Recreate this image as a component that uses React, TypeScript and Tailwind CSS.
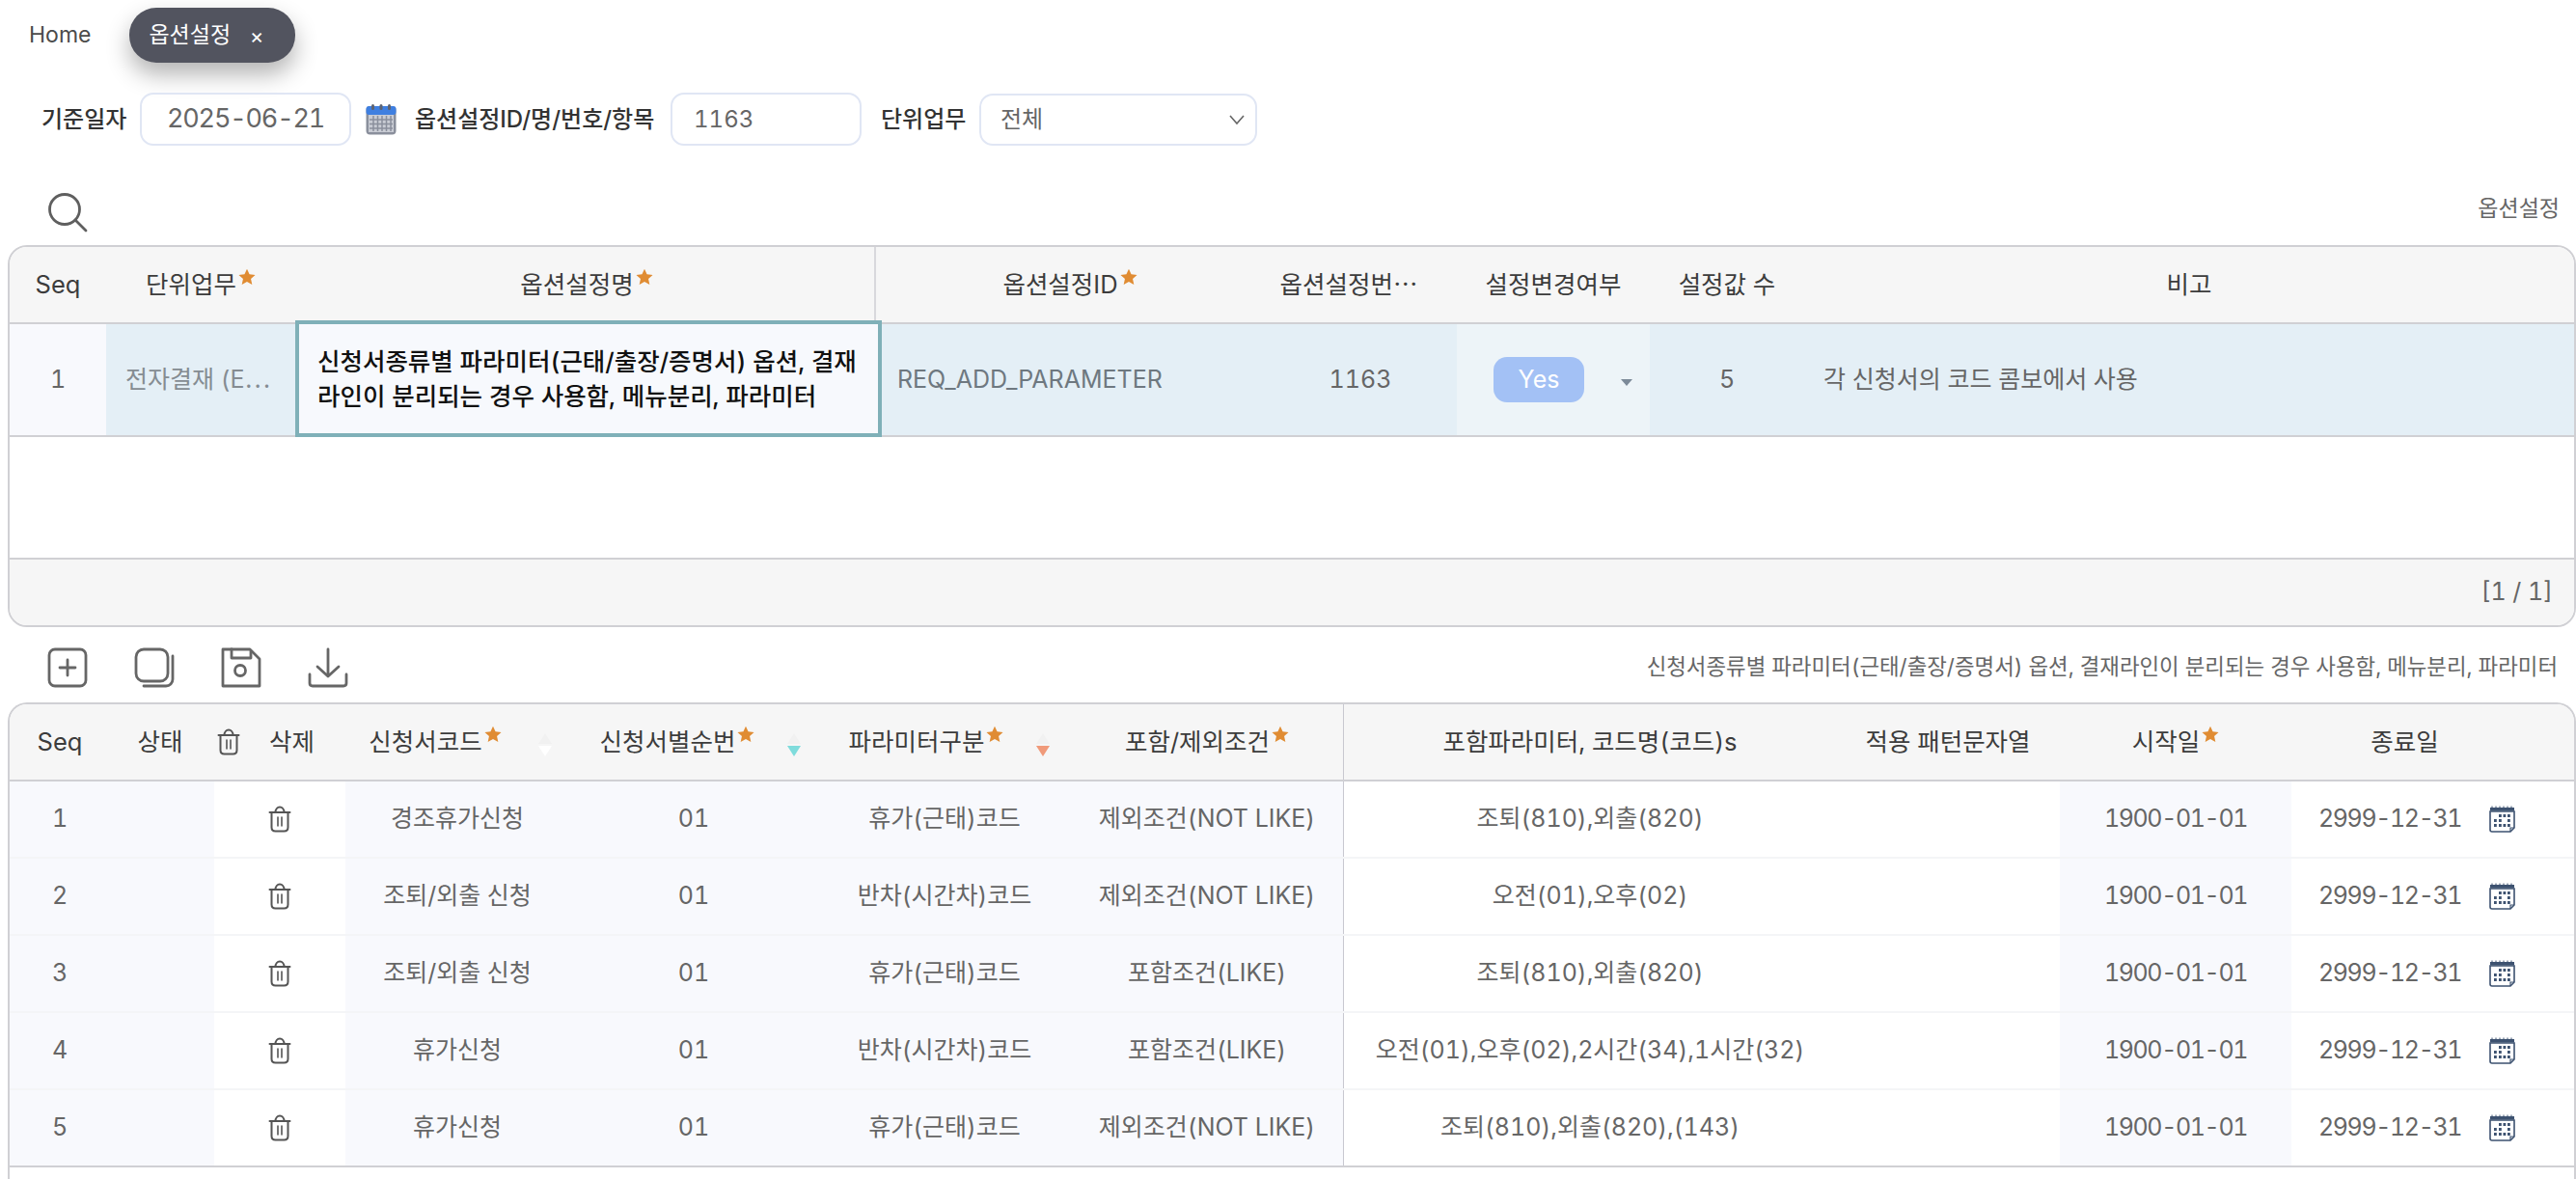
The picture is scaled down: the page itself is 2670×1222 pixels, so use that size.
import React from "react";

const FONT = "font-['Inter','Noto_Sans_CJK_KR',sans-serif]";

function Star() {
  return (
    <svg width="18" height="18" viewBox="0 0 24 24" className="self-start mt-[2px] ml-[2px] shrink-0">
      <path d="M12 1l3.400 7.400 8 .9-6 5.400 1.700 8L12 18.600 4.900 22.700l1.700-8-6-5.400 8-.9z" fill="#e08c33" />
    </svg>
  );
}

function Trash({ className = "" }: { className?: string }) {
  return (
    <svg width="24" height="28" viewBox="0 0 24 28" fill="none" stroke="#555" strokeWidth="2" strokeLinecap="round" strokeLinejoin="round" className={className}>
      <path d="M1.500 7h21" />
      <path d="M7.500 7c0-3.200 2-5.500 4.500-5.500S16.500 3.800 16.500 7" />
      <path d="M3.500 7v15.500c0 2.500 1.500 4 4 4h9c2.500 0 4-1.500 4-4V7" />
      <path d="M10 12v9M14 12v9" strokeWidth="1.600" />
    </svg>
  );
}

function SmallCal() {
  return (
    <svg width="27" height="28" viewBox="0 0 27 28" className="shrink-0">
      <path d="M1 6h25v17l-4 4H3c-1 0-2-1-2-2z" fill="#fff" stroke="#3d5270" strokeWidth="1.600" />
      <path d="M22 27v-4h4" fill="none" stroke="#3d5270" strokeWidth="1.200" />
      <rect x="1" y="2" width="25" height="3.500" fill="#3d5270" />
      <path d="M3 0.500v2M7 0.500v2M11 0.500v2M15 0.500v2M19 0.500v2M23 0.500v2" stroke="#3d5270" strokeWidth="1" />
      <g fill="#3d5270">
        <rect x="10" y="9" width="2.800" height="3" />
        <rect x="14.500" y="9" width="2.800" height="3" />
        <rect x="19" y="9" width="2.800" height="3" />
        <rect x="5" y="14" width="2.800" height="3" />
        <rect x="10" y="14" width="2.800" height="3" />
        <rect x="19" y="14" width="2.800" height="3" />
        <rect x="5" y="19" width="2.800" height="3" />
        <rect x="10" y="19" width="2.800" height="3" />
        <rect x="14.500" y="19" width="2.800" height="3" />
        <rect x="19" y="19" width="2.800" height="3" />
      </g>
    </svg>
  );
}

function BigCal() {
  return (
    <svg width="32" height="33" viewBox="0 0 32 33" className="shrink-0">
      <rect x="0.500" y="3" width="31" height="29.500" rx="4" fill="#8a8f9c" />
      <rect x="0.500" y="3" width="31" height="9" rx="3" fill="#3f7fe0" />
      <rect x="3" y="12" width="26" height="18" fill="#c9ccd4" />
      <g fill="#5e6370">
        <rect x="6" y="1" width="3" height="6" rx="1.500" />
        <rect x="14.500" y="1" width="3" height="6" rx="1.500" />
        <rect x="23" y="1" width="3" height="6" rx="1.500" />
      </g>
      <path d="M4 17h24M4 21.500h24M4 26h24M8 13v16M12.500 13v16M17 13v16M21.500 13v16M26 13v16" stroke="#8a8f9c" strokeWidth="1.500" />
    </svg>
  );
}

function SearchIcon() {
  return (
    <svg width="42" height="42" viewBox="0 0 42 42" fill="none" stroke="#5f5f5f" strokeWidth="2.800" strokeLinecap="round">
      <circle cx="18" cy="18" r="15.500" />
      <path d="M29 29l11 11" />
    </svg>
  );
}

function ToolIcon({ children }: { children: React.ReactNode }) {
  return (
    <svg width="42" height="42" viewBox="0 0 42 42" fill="none" stroke="#666" strokeWidth="2.800" strokeLinecap="round" strokeLinejoin="round" className="shrink-0">
      {children}
    </svg>
  );
}

function Header({ children, star, pr = 0, className = "" }: { children?: React.ReactNode; star?: boolean; pr?: number; className?: string }) {
  return (
    <div className={`relative flex items-center justify-center h-full text-[25.500px] text-[#3c3c3c] ${className}`} style={pr ? { paddingRight: pr } : undefined}>
      <span className="flex items-center whitespace-nowrap">
        <span>{children}</span>
        {star && <Star />}
      </span>
    </div>
  );
}

function Sort({ color, right = 18 }: { color: string; right?: number }) {
  return (
    <div className="absolute top-[30px] flex flex-col items-center gap-[2px]" style={{ right }}>
      <div className="w-0 h-0 border-x-[7px] border-x-transparent border-b-[11px] border-b-[#f1f1f1]" />
      <div className="w-0 h-0 border-x-[7px] border-x-transparent border-t-[11px]" style={{ borderTopColor: color }} />
    </div>
  );
}

const rows = [
  ["1", "경조휴가신청", "01", "휴가(근태)코드", "제외조건(NOT LIKE)", "조퇴(810),외출(820)"],
  ["2", "조퇴/외출 신청", "01", "반차(시간차)코드", "제외조건(NOT LIKE)", "오전(01),오후(02)"],
  ["3", "조퇴/외출 신청", "01", "휴가(근태)코드", "포함조건(LIKE)", "조퇴(810),외출(820)"],
  ["4", "휴가신청", "01", "반차(시간차)코드", "포함조건(LIKE)", "오전(01),오후(02),2시간(34),1시간(32)"],
  ["5", "휴가신청", "01", "휴가(근태)코드", "제외조건(NOT LIKE)", "조퇴(810),외출(820),(143)"],
];

const grid2 = "grid grid-cols-[100px_112px_136px_232px_258px_262px_283px_510px_232px_240px_235px_1fr]";
const cell = "flex items-center justify-center h-full";

export default function App() {
  return (
    <div className={`w-[2670px] h-[1222px] overflow-hidden bg-white ${FONT} text-[#666] text-[25px] tabular-nums`}>
      {/* tabs */}
      <div className="flex items-center pl-[30px] pt-[8px] h-[65px]">
        <span className="text-[23px] text-[#4b4b4b]">Home</span>
        <div className="ml-[40px] w-[172px] h-[57px] rounded-[28px] bg-[#52545f] text-white flex items-center pl-[20px] shadow-[0_12px_24px_rgba(0,0,0,0.3)]">
          <span className="text-[23px]">옵션설정</span>
          <span className="ml-[20px] text-[22px] leading-none">×</span>
        </div>
      </div>

      {/* filters */}
      <div className="flex items-center mt-[31px] h-[55px] pl-[43px]">
        <span className="w-[102px] text-[24px] font-medium text-[#333]">기준일자</span>
        <div className="w-[219px] h-[55px] rounded-[14px] border-2 border-[#e0e6f4] flex items-center pl-[26px] text-[27px] tracking-[-1.200px] text-[#666]">2025-06-21</div>
        <div className="ml-[15px]"><BigCal /></div>
        <span className="ml-[19px] w-[265px] text-[24px] font-medium text-[#333] whitespace-nowrap">옵션설정ID/명/번호/항목</span>
        <div className="w-[198px] h-[55px] rounded-[14px] border-2 border-[#e0e6f4] flex items-center pl-[22px] text-[24px]">1163</div>
        <span className="ml-[20px] w-[102px] text-[24px] font-medium text-[#333]">단위업무</span>
        <div className="w-[288px] h-[54px] rounded-[14px] border-2 border-[#e0e6f4] flex items-center justify-between pl-[20px] pr-[10px] text-[24px]">
          <span>전체</span>
          <svg width="18" height="12" viewBox="0 0 18 12" fill="none" stroke="#666" strokeWidth="1.600"><path d="M2 2l7 8 7-8" /></svg>
        </div>
      </div>

      {/* search row */}
      <div className="h-[103px] flex items-end justify-between pl-[49px] pr-[17px] pb-[13px]">
        <SearchIcon />
        <span className="text-[23px] text-[#666] mb-[8px]">옵션설정</span>
      </div>

      {/* table 1 */}
      <div className="ml-[8px] h-[396px] rounded-[20px] border-2 border-[#d0d0d4] overflow-hidden flex flex-col">
        <div className="grid grid-cols-[100px_196px_602px_402px_200px_200px_160px_1fr] h-[80px] shrink-0 bg-[#f6f6f6] items-center border-b-2 border-[#d0d0d4]">
          <Header>Seq</Header>
          <Header star>단위업무</Header>
          <Header star className="border-r-2 border-[#d8d8dc] pl-[4px]">옵션설정명</Header>
          <Header star>옵션설정ID</Header>
          <Header pr={24}>옵션설정번⋯</Header>
          <Header>설정변경여부</Header>
          <Header>설정값 수</Header>
          <Header>비고</Header>
        </div>
        <div className="grid grid-cols-[100px_196px_602px_402px_200px_200px_160px_1fr] h-[117px] shrink-0 border-b-2 border-[#d0d0d4] bg-[#e4eff6]">
          <div className={`${cell} bg-[#f8f9fd]`}>1</div>
          <div className="flex items-center pl-[20px] h-full whitespace-nowrap text-[#858c92]">전자결재 (E⋯</div>
          <div className="relative h-full">
            <div className="absolute -top-[4px] -bottom-[2px] left-0 -right-[6px] border-[4px] border-[#7fb0b8] bg-[#f7f9fd] flex items-center pl-[19px] pr-[6px] text-[25.500px] font-medium leading-[36px] text-[#111]">
              <span className="whitespace-nowrap">신청서종류별 파라미터(근태/출장/증명서) 옵션, 결재<br />라인이 분리되는 경우 사용함, 메뉴분리, 파라미터</span>
            </div>
          </div>
          <div className="flex items-center pl-[22px] h-full text-[#6e7880]">REQ_ADD_PARAMETER</div>
          <div className={cell}>1163</div>
          <div className="relative flex items-center h-full bg-[#edf4f8] pl-[38px]">
            <div className="w-[94px] h-[47px] rounded-[14px] bg-[#a3c1f5] text-white flex items-center justify-center">Yes</div>
            <div className="absolute right-[18px] top-[57px] w-0 h-0 border-x-[6px] border-x-transparent border-t-[7px] border-t-[#7c8a99]" />
          </div>
          <div className={cell}>5</div>
          <div className="flex items-center pl-[20px] h-full">각 신청서의 코드 콤보에서 사용</div>
        </div>
        <div className="flex-1" />
        <div className="h-[70px] shrink-0 bg-[#f6f6f6] border-t-2 border-[#d0d0d4] flex items-center justify-end pr-[22px]">[1 / 1]</div>
      </div>

      {/* toolbar */}
      <div className="h-[78px] flex items-center justify-between pl-[49px] pr-[19px]">
        <div className="flex items-center gap-[48px] mt-[6px]">
          <ToolIcon>
            <rect x="2" y="2" width="38" height="38" rx="6" />
            <path d="M21 13v16M13 21h16" />
          </ToolIcon>
          <ToolIcon>
            <rect x="2" y="2" width="33" height="33" rx="8" />
            <path d="M40 9v24c0 4-3 7-7 7H10" />
          </ToolIcon>
          <ToolIcon>
            <path d="M2 2h28l10 10v28H2z" />
            <path d="M11 2v9h20V4" />
            <circle cx="20" cy="24" r="5.500" />
          </ToolIcon>
          <ToolIcon>
            <path d="M21 2v28M10 20l11 10 11-10" />
            <path d="M2 28v9c0 2 1 3 3 3h32c2 0 3-1 3-3v-9" />
          </ToolIcon>
        </div>
        <span className="text-[22.400px] whitespace-nowrap mt-[4px]">신청서종류별 파라미터(근태/출장/증명서) 옵션, 결재라인이 분리되는 경우 사용함, 메뉴분리, 파라미터</span>
      </div>

      {/* table 2 */}
      <div className="ml-[8px] h-[600px] rounded-t-[20px] border-l-2 border-t-2 border-r-2 border-[#d0d0d4] overflow-hidden">
        <div className={`${grid2} h-[80px] bg-[#f6f6f6] border-b-2 border-[#d0d0d4]`}>
          <Header className="pl-[4px]">Seq</Header>
          <Header>상태</Header>
          <div className="flex items-center h-full pl-[3px]">
            <Trash />
            <span className="ml-[30px] text-[#3c3c3c] text-[25.500px] whitespace-nowrap">삭제</span>
          </div>
          <Header star pr={46}>신청서코드<Sort color="#ffffff" /></Header>
          <Header star pr={34}>신청서별순번<Sort color="#7fdcdc" /></Header>
          <Header star pr={38}>파라미터구분<Sort color="#f09a7a" right={22} /></Header>
          <Header star className="border-r border-[#c8c8d0]">포함/제외조건</Header>
          <Header>포함파라미터, 코드명(코드)s</Header>
          <Header>적용 패턴문자열</Header>
          <Header star>시작일</Header>
          <Header>종료일</Header>
          <div />
        </div>
        {rows.map((r, i) => (
          <div key={i} className={`${grid2} h-[80px] bg-white border-b-2 ${i === 4 ? "border-[#d0d0d4]" : "border-[#f4f5f7]"}`}>
            <div className={`${cell} bg-[#f8f9fd] pl-[4px]`}>{r[0]}</div>
            <div className="h-full bg-[#f8f9fd]" />
            <div className={cell}><Trash /></div>
            <div className={`${cell} bg-[#f8f9fd]`}>{r[1]}</div>
            <div className={`${cell} bg-[#f8f9fd]`}>{r[2]}</div>
            <div className={`${cell} bg-[#f8f9fd]`}>{r[3]}</div>
            <div className={`${cell} bg-[#f8f9fd] border-r border-[#c8c8d0]`}>{r[4]}</div>
            <div className={cell}>{r[5]}</div>
            <div />
            <div className={`${cell} bg-[#f8f9fd] tracking-[-1.400px]`}>1900-01-01</div>
            <div className="flex items-center justify-between h-full pl-[28px] pr-[3px]">
              <span className="tracking-[-1.400px]">2999-12-31</span>
              <SmallCal />
            </div>
            <div />
          </div>
        ))}
      </div>
    </div>
  );
}
